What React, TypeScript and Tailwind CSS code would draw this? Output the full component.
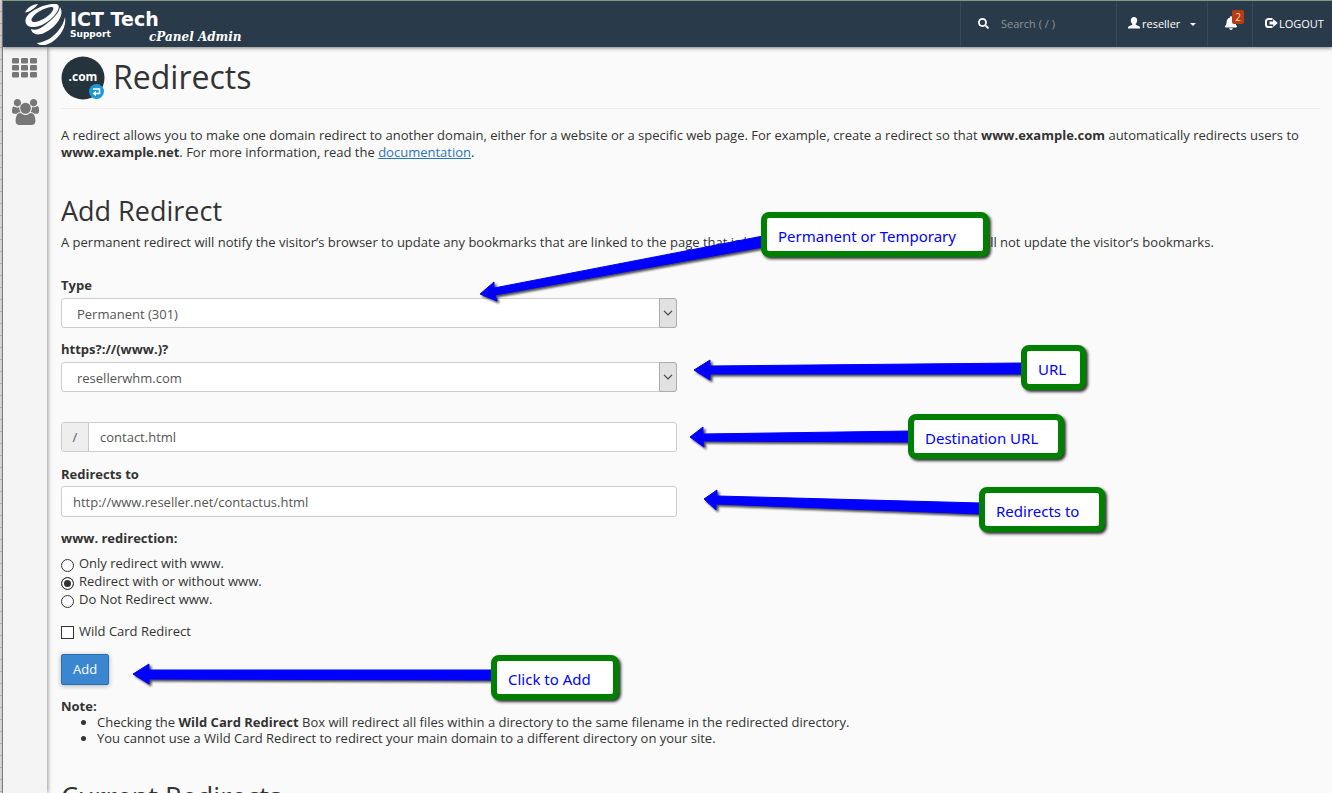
import React, { useState } from "react";
import { FaBell, FaSearch } from "react-icons/fa";

function BrandMark() {
  return (
    <svg viewBox="0 0 42 42" className="h-[42px] w-[42px] shrink-0" fill="#fff" aria-hidden="true">
      <path d="M14 1C9 1 3 5 1 9.500c4 0 11-5 13-8.500Z" />
      <path
        fillRule="evenodd"
        d="M30 1c4-.5 6 1.500 4 6-3 7-14 16-23 17-7 .8-11-3-9-9C5 8 20 1 30 1ZM27 4C20 5 11 10 8 15c-2 4 2 5 7 3 6-2 12-7 14-11 1-2 0-3.300-2-3Z"
      />
      <path d="M36 4c5 7-3 20-16 26-7 3-12 1-13-4 4 2 9 0 14-4 8-6 14-12 15-18Z" />
      <path d="M41 14c2 11-7 23-17 27-5 2-10 1-11-1 9-1 16-6 21-12 4-5 6-9 7-14Z" />
    </svg>
  );
}

function DomainIcon() {
  return (
    <svg viewBox="0 0 44 44" className="h-11 w-11 shrink-0" aria-hidden="true">
      <circle cx="22" cy="22" r="21.500" fill="#25333c" />
      <text x="22" y="25" textAnchor="middle" fill="#fff" fontSize="12" fontWeight="700" fontFamily="Open Sans, sans-serif">
        .com
      </text>
      <circle cx="35.500" cy="35.500" r="7.500" fill="#1b9ad9" />
      <path d="M32 33h6.500v4.500h-4" fill="none" stroke="#fff" strokeWidth="1.500" />
      <path d="M31.500 37.500l3.500-2.800v5.600z" fill="#fff" />
    </svg>
  );
}

function GridIcon() {
  return (
    <svg viewBox="0 0 25 20" className="h-5 w-[25px]" fill="#777" aria-hidden="true">
      {[0, 7, 14].map((y) =>
        [0, 9, 18].map((x) => <rect key={`${x}-${y}`} x={x} y={y} width="7" height="5.500" rx="1.300" />)
      )}
    </svg>
  );
}

function UsersIcon() {
  return (
    <svg viewBox="0 0 1920 1792" className="h-[26px] w-[27px]" preserveAspectRatio="none" fill="#777" aria-hidden="true">
      <path d="M593 896q-162 5-265 128h-134q-82 0-138-40.500t-56-118.500q0-353 124-353 6 0 43.500 21t97.500 42.500 119 21.500q67 0 133-23-5 37-5 66 0 159 93 283zm1071 637q0 120-73 189.500t-194 69.500h-874q-121 0-194-69.500t-73-189.500q0-53 3.500-103.500t14-109 26.500-108.500 43-97.500 62-81 85.500-53.500 111.500-20q10 0 43 21.500t73 48 107 48 135 21.500 135-21.500 107-48 73-48 43-21.500q61 0 111.500 20t85.500 53.500 62 81 43 97.500 26.500 108.500 14 109 3.500 103.500zm-1024-1277q0 106-75 181t-181 75-181-75-75-181 75-181 181-75 181 75 75 181zm704 384q0 159-112.500 271.500t-271.500 112.500-271.500-112.500-112.500-271.500 112.500-271.500 271.500-112.500 271.500 112.500 112.500 271.500zm576 225q0 78-56 118.500t-138 40.500h-134q-103-123-265-128 93-124 93-283 0-29-5-66 66 23 133 23 59 0 119-21.500t97.500-42.500 43.500-21q124 0 124 353zm-128-609q0 106-75 181t-181 75-181-75-75-181 75-181 181-75 181 75 75 181z" />
    </svg>
  );
}

function UserIcon() {
  return (
    <svg viewBox="0 0 12 12" className="h-3 w-3" fill="currentColor" aria-hidden="true">
      <path d="M6 0c2 0 3.200 1.400 3.200 3.300 0 1.500-.7 2.900-1.500 3.500v1l3.300 1.500c.7.300 1 .8 1 1.500V11.500H0v-.7c0-.7.300-1.200 1-1.500l3.300-1.500v-1C3.500 6.200 2.800 4.800 2.800 3.300 2.800 1.400 4 0 6 0Z" />
    </svg>
  );
}

function LogoutIcon() {
  return (
    <svg viewBox="0 0 13 12" className="h-3 w-[13px] shrink-0" aria-hidden="true">
      <path d="M7.500 1.900H3.700Q1 1.900 1 4.600v2.800q0 2.700 2.700 2.700H7.500" fill="none" stroke="currentColor" strokeWidth="2" />
      <path d="M4.500 4.500h3.700V2l4.600 4-4.600 4V7.500H4.500Z" fill="currentColor" />
    </svg>
  );
}

function TopBar() {
  return (
    <header className="relative z-20 flex h-[47px] shrink-0 items-stretch border-t border-[#7f9b81] bg-[#293a4a] text-white shadow-[0_1px_4px_rgba(0,0,0,0.5)]">
      <a href="#home" className="flex items-start pl-[21px] pt-[2px]">
        <BrandMark />
        <span className="flex flex-col pl-1 pt-[7px] font-['DejaVu_Sans'] font-bold">
          <span className="text-[19px] leading-[18px]">ICT Tech</span>
          <span className="flex items-start">
            <span className="w-[79px] pt-px text-[9px] leading-[10px]">Support</span>
            <span className="whitespace-nowrap pt-[3px] font-['DejaVu_Serif'] text-[12px] leading-[13px] italic">cPanel Admin</span>
          </span>
        </span>
      </a>
      <div className="ml-auto flex items-stretch">
        <div className="flex w-[156px] items-center gap-3 border-l border-[#36495a] pb-px pl-[17px]">
          <FaSearch className="h-[11px] w-[11px] shrink-0" />
          <input
            type="search"
            aria-label="Search"
            placeholder="Search ( / )"
            className="w-full min-w-0 bg-transparent text-[11px] outline-none placeholder:text-[#8c959d]"
          />
        </div>
        <button type="button" className="flex w-[91px] items-center border-l border-[#36495a] pb-[2px] pl-[11px] text-[11px]">
          <UserIcon />
          <span className="pl-[2px]">reseller</span>
          <span className="ml-[10px] mt-[3px] border-x-[3px] border-t-[3px] border-x-transparent border-t-white" />
        </button>
        <button type="button" aria-label="Notifications, 2" className="relative flex w-[45px] items-center border-l border-[#36495a] pb-[2px] pl-4">
          <FaBell className="h-[14px] w-[14px]" />
          <span className="absolute left-6 top-[9px] h-[14px] w-3 rounded-xs bg-[#b83c11] text-center text-[10px] leading-[14px] text-[#eedad2]">2</span>
        </button>
        <a href="#logout" className="flex w-20 items-center gap-px border-l border-[#36495a] pb-[2px] pl-3 text-[11px]">
          <LogoutIcon />
          LOGOUT
        </a>
      </div>
    </header>
  );
}

function SelectBox({ id, options }: { id: string; options: string[] }) {
  return (
    <div className="relative h-[30px]">
      <select id={id} className="h-full w-full appearance-none rounded-[3px] border border-[#ccc] bg-white pl-[15px] pr-6 pt-[2px] text-[#555]">
        {options.map((option) => (
          <option key={option}>{option}</option>
        ))}
      </select>
      <span className="pointer-events-none absolute inset-y-0 right-0 flex w-[18px] items-center justify-center rounded-r-[3px] border border-[#adadad] bg-[#e1e1e1]">
        <svg viewBox="0 0 10 6" className="h-[6px] w-[10px]" fill="none" stroke="#444" strokeWidth="1.200" aria-hidden="true">
          <path d="M1 .8l4 4 4-4" />
        </svg>
      </span>
    </div>
  );
}

const modes = ["Only redirect with www.", "Redirect with or without www.", "Do Not Redirect www."];

function RedirectForm() {
  const [mode, setMode] = useState(modes[1]);
  return (
    <form className="w-full max-w-[616px]" onSubmit={(e) => e.preventDefault()}>
      <label htmlFor="type" className="mb-1 block font-bold">Type</label>
      <SelectBox id="type" options={["Permanent (301)", "Temporary (302)"]} />
      <label htmlFor="domain" className="mb-1 mt-[13px] block font-bold">https?://(www.)?</label>
      <SelectBox id="domain" options={["resellerwhm.com"]} />
      <div className="mt-[30px] flex h-[30px] rounded-[3px] border border-[#ccc] bg-white text-[#555]">
        <label htmlFor="path" className="flex w-[27px] items-center justify-center rounded-l-[3px] border-r border-[#ccc] bg-[#eee]">/</label>
        <input id="path" type="text" defaultValue="contact.html" className="min-w-0 flex-1 px-[11px] outline-none" />
      </div>
      <label htmlFor="target" className="mb-[3px] mt-[14px] block font-bold">Redirects to</label>
      <input
        id="target"
        type="text"
        defaultValue="http://www.reseller.net/contactus.html"
        className="block h-[31px] w-full rounded-[3px] border border-[#ccc] bg-white px-[11px] text-[#555]"
      />
      <fieldset className="mt-[13px]">
        <legend className="mb-2 font-bold">www. redirection:</legend>
        {modes.map((label) => (
          <label key={label} className="flex h-[18px] items-start gap-[5px]">
            <input
              type="radio"
              name="mode"
              checked={mode === label}
              onChange={() => setMode(label)}
              className="mt-1 h-[13px] w-[13px] appearance-none rounded-full border border-[#333] bg-white checked:bg-[#333] checked:shadow-[inset_0_0_0_2px_#fff]"
            />
            {label}
          </label>
        ))}
      </fieldset>
      <label className="mt-[14px] flex h-[18px] items-start gap-[5px]">
        <input type="checkbox" className="mt-[3px] h-[13px] w-[13px] appearance-none border border-[#333] bg-white checked:bg-[#333]" />
        Wild Card Redirect
      </label>
      <button type="submit" className="mt-[13px] block h-[31px] rounded-xs border border-[#2a6fb5] bg-[#3a87cf] px-[11px] text-white shadow-[0_1px_5px_rgba(0,0,0,0.3)]">
        Add
      </button>
    </form>
  );
}

function Callout({ className, children }: { className: string; children: React.ReactNode }) {
  return (
    <div
      className={`absolute z-10 flex h-[45px] items-center whitespace-nowrap rounded-lg border-[6px] border-[#008000] bg-white pl-[11px] pt-1 text-[15px] text-[#0000ff] shadow-[2px_2px_3px_rgba(0,0,0,0.8)] ${className}`}
    >
      {children}
    </div>
  );
}

function Annotations() {
  return (
    <div className="pointer-events-none absolute left-0 top-0 z-10 h-[793px] w-[1332px] font-['Noto_Sans',sans-serif]">
      <svg viewBox="0 0 1332 793" className="h-full w-full drop-shadow-[2px_2px_1px_rgba(0,0,0,0.7)]" fill="#00f" stroke="#00f" strokeLinejoin="round" aria-hidden="true">
        <path d="M480 294L494 282V288L763 236V247L495 295L497 301Z" />
        <path d="M694 370L710 360V366L1024 363V374L710 374V380Z" />
        <path d="M690 437L703 427V434L910 431V442L703 441L704 447Z" />
        <path d="M704 499L717 490V496L981 503V514L716 504V510Z" />
        <path d="M133 674L149 664V670L493 670V680L149 679V684Z" />
      </svg>
      <Callout className="left-[761px] top-[212px] w-[228px]">Permanent or Temporary</Callout>
      <Callout className="left-[1021px] top-[345px] w-[65px]">URL</Callout>
      <Callout className="left-[908px] top-[414px] w-[156px]">Destination URL</Callout>
      <Callout className="left-[979px] top-[487px] w-[126px]">Redirects to</Callout>
      <Callout className="left-[491px] top-[655px] w-[128px]">Click to Add</Callout>
    </div>
  );
}

export default function App() {
  return (
    <div className="relative flex h-screen overflow-hidden bg-[#fafafa] font-['Open_Sans',sans-serif] text-[13px] leading-[17px] text-[#333]">
      <div className="w-[3px] shrink-0 border-r border-[#8b8b8b] bg-[repeating-linear-gradient(#d9d9d9_0_11px,#b5b5b5_11px_12px)]" />
      <div className="flex min-w-0 flex-1 flex-col">
        <TopBar />
        <div className="flex min-h-0 flex-1">
          <nav aria-label="Main" className="flex w-11 shrink-0 flex-col items-start gap-[21px] bg-[#f4f4f4] pl-[9px] pt-[11px] shadow-[1px_0_4px_rgba(0,0,0,0.4)]">
            <a href="#apps" aria-label="All features"><GridIcon /></a>
            <a href="#users" aria-label="Users"><UsersIcon /></a>
          </nav>
          <main className="min-w-0 flex-1 overflow-hidden pl-[14px] pr-3 pt-[9px]">
            <div className="flex items-start gap-2 border-b border-[#eee] pb-2">
              <DomainIcon />
              <h1 className="text-[32px] leading-[42px]">Redirects</h1>
            </div>
            <p className="mt-[18px]">
              A redirect allows you to make one domain redirect to another domain, either for a website or a specific web page. For
              example, create a redirect so that <strong>www.example.com</strong> automatically redirects users to{" "}
              <strong>www.example.net</strong>. For more information, read the{" "}
              <a href="#documentation" className="text-[#2a74bd] underline">documentation</a>.
            </p>
            <h2 className="mt-[34px] text-[27px] leading-8">Add Redirect</h2>
            <p className="mb-[26px] mt-[7px]">
              A permanent redirect will notify the visitor’s browser to update any bookmarks that are linked to the page that is being
              redirected. Temporary redirects will not update the visitor’s bookmarks.
            </p>
            <RedirectForm />
            <div className="mt-[13px] leading-4">
              <strong>Note:</strong>
              <ul className="list-disc pl-9">
                <li>
                  Checking the <strong>Wild Card Redirect</strong> Box will redirect all files within a directory to the same filename in
                  the redirected directory.
                </li>
                <li>You cannot use a Wild Card Redirect to redirect your main domain to a different directory on your site.</li>
              </ul>
            </div>
            <h2 className="mt-[35px] text-[27px] leading-8">Current Redirects</h2>
          </main>
        </div>
      </div>
      <Annotations />
    </div>
  );
}
